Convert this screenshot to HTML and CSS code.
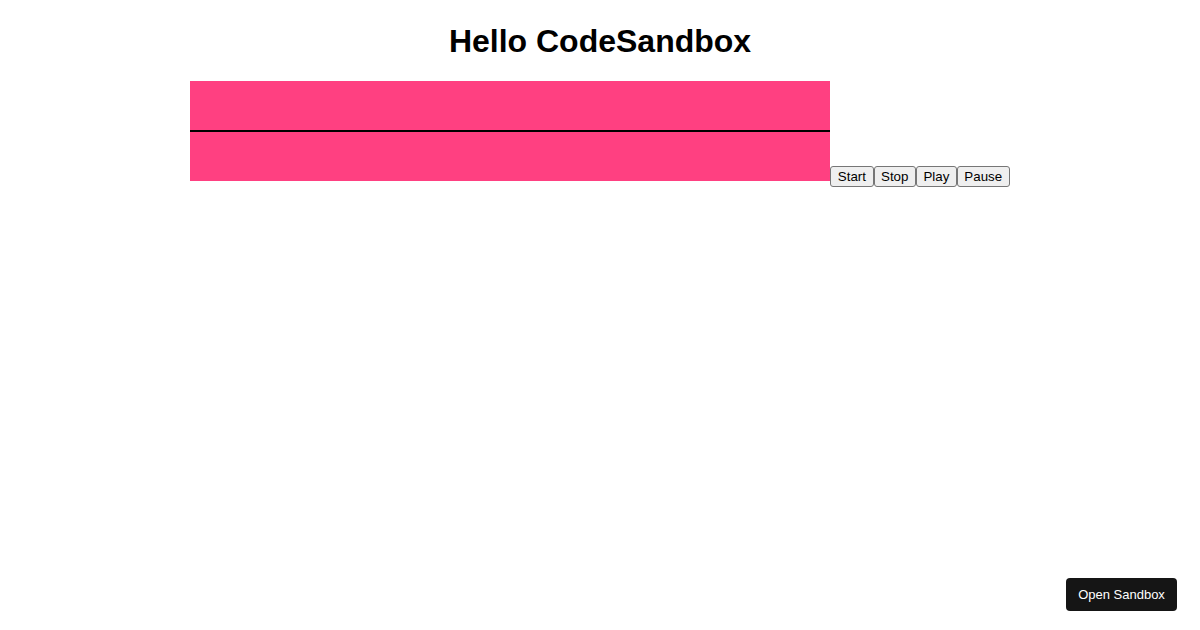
FILE: index.html
```html
<!DOCTYPE html>
<html lang="en">
<head>
    <meta charset="UTF-8">
    <title>Hello CodeSandbox</title>
    <link rel="stylesheet" href="styles.css">
</head>
<body>
    <div class="App">
        <h1>Hello CodeSandbox</h1>
        <div class="stage"></div><button class="ctrl">Start</button><button class="ctrl">Stop</button><button class="ctrl">Play</button><button class="ctrl">Pause</button>
    </div>
    <a href="#" class="open-sandbox">Open Sandbox</a>
</body>
</html>
```

FILE: styles.css
```css
body {
    font-family: 'Liberation Sans', Arial, sans-serif;
}

.App {
    text-align: center;
}

.App h1 {
    margin-top: 15px;
}

.stage {
    display: inline-block;
    width: 640px;
    height: 100px;
    background: linear-gradient(to bottom, #ff4081 0, #ff4081 49px, #000 49px, #000 51px, #ff4081 51px);
}

.ctrl {
    font-family: 'Liberation Sans', Arial, sans-serif;
    font-size: 13.333px;
    padding: 2px 6.5px;
    background-color: #efefef;
    border: 1px solid #767676;
    border-radius: 3px;
    color: #000;
}

.open-sandbox {
    position: fixed;
    right: 23px;
    bottom: 19px;
    width: 111px;
    height: 33px;
    display: flex;
    align-items: center;
    justify-content: center;
    box-sizing: border-box;
    background-color: #151515;
    color: #fff;
    border-radius: 4px;
    font-size: 13px;
    text-decoration: none;
}
```
